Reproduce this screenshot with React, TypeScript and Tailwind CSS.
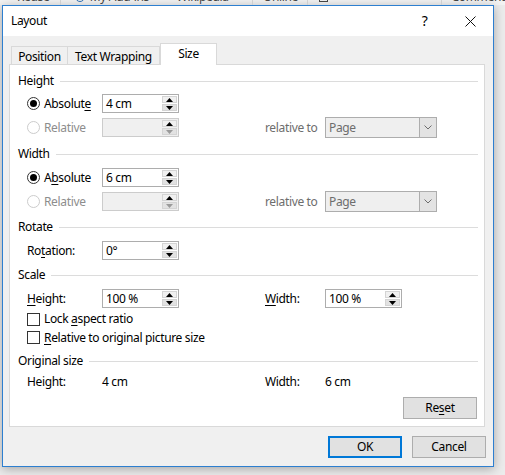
import React from 'react';

/* small triangle arrows for the spin buttons */
function Tri({ up, color }: { up?: boolean; color: string }) {
  return (
    <svg width="7" height="4" viewBox="0 0 7 4">
      <path d={up ? 'M0 4 L3.5 0 L7 4 Z' : 'M0 0 L3.5 4 L7 0 Z'} fill={color} />
    </svg>
  );
}

function Spin({ value, disabled }: { value?: string; disabled?: boolean }) {
  return (
    <div
      className={
        disabled
          ? 'flex h-[19px] w-[77px] border border-[#cccccc] bg-[#f0f0f0]'
          : 'flex h-[19px] w-[77px] border border-[#adadad] bg-white'
      }
    >
      <div className="flex flex-1 items-center pl-[3px] text-black">{value}</div>
      <div className="flex w-[16px] flex-col gap-px py-px pr-px">
        <div className="flex flex-1 items-center justify-center border border-[#d4d4d4] bg-[#f0f0f0]">
          <Tri up color="#000" />
        </div>
        <div className="flex flex-1 items-center justify-center border border-[#d4d4d4] bg-[#e2e2e2]">
          <Tri color={disabled ? '#9a9a9a' : '#000'} />
        </div>
      </div>
    </div>
  );
}

function Select() {
  return (
    <div className="flex h-[21px] w-[112px] border border-[#adadad] bg-[#efefef]">
      <div className="flex flex-1 items-center pl-[3px] text-[#6d6d6d]">Page</div>
      <div className="flex w-[17px] items-center justify-center border-l border-[#adadad] bg-[#e3e3e3]">
        <svg width="8" height="5" viewBox="0 0 8 5">
          <path d="M0.5 0.5 L4 4 L7.5 0.5" fill="none" stroke="#6d6d6d" strokeWidth="1" />
        </svg>
      </div>
    </div>
  );
}

function Radio({ checked, disabled }: { checked?: boolean; disabled?: boolean }) {
  return (
    <span
      className={
        disabled
          ? 'flex h-[13px] w-[13px] items-center justify-center rounded-full border border-[#cccccc] bg-white'
          : 'flex h-[13px] w-[13px] items-center justify-center rounded-full border border-[#333333] bg-white'
      }
    >
      {checked && <span className="h-[7px] w-[7px] rounded-full bg-black" />}
    </span>
  );
}

function Check() {
  return <span className="h-[13px] w-[13px] border border-[#333333] bg-white" />;
}

function Header({ children, className }: { children: React.ReactNode; className: string }) {
  return (
    <div className={`flex h-[20px] items-center pl-[8px] pr-[6px] ${className}`}>
      <span>{children}</span>
      <div className="ml-[6px] h-px flex-1 bg-[#dcdcdc]" />
    </div>
  );
}

function U({ children }: { children: React.ReactNode }) {
  return <span className="underline underline-offset-2">{children}</span>;
}

export default function App() {
  return (
    <div className="relative h-[475px] w-[505px] overflow-hidden bg-[#ececec] font-['Noto_Sans',sans-serif] text-[12px] leading-[16px] tracking-[-0.35px] text-black">
      {/* ── Ribbon behind the dialog ── */}
      <div className="h-[5px] overflow-hidden bg-[#f3f3f3] text-[#444]">
        <div className="-mt-[11px] flex h-[16px] items-center">
          <span className="ml-[17px] w-[46px]">Reuse</span>
          <span className="h-[16px] w-px bg-[#d0d0d0]" />
          <span className="ml-[14px] h-[10px] w-[10px] rounded-full border border-[#2b6cb0]" />
          <span className="ml-[5px] w-[90px]">My Add-ins</span>
          <span className="w-[82px] pl-[2px]">Wikipedia</span>
          <span className="h-[16px] w-px bg-[#d0d0d0]" />
          <span className="ml-[10px] w-[47px]">Online</span>
          <span className="h-[16px] w-px bg-[#d0d0d0]" />
          <span className="ml-[11px] h-[9px] w-[9px] border border-[#444]" />
          <span className="ml-[113px] h-[16px] w-px bg-[#d0d0d0]" />
          <span className="ml-[10px]">Comment</span>
        </div>
      </div>

      {/* ── Dialog ── */}
      <div className="ml-[2px] flex h-[462px] w-[492px] flex-col border border-[#2d7fd0] bg-[#f0f0f0] shadow-[0_2px_10px_rgba(0,0,0,0.3)]">
        {/* title bar */}
        <div className="flex h-[30px] items-center bg-white">
          <span className="flex-1 pl-[8px]">Layout</span>
          <span className="flex w-[45px] justify-center text-[14px]">?</span>
          <span className="flex w-[46px] justify-center">
            <svg width="11" height="11" viewBox="0 0 11 11">
              <path d="M0.5 0.5 L10.5 10.5 M10.5 0.5 L0.5 10.5" stroke="#111" strokeWidth="1" />
            </svg>
          </span>
        </div>

        <div className="flex flex-1 flex-col pt-[7px]">
          {/* tabs */}
          <div className="ml-[6px] flex items-end pl-[2px]">
            <div className="flex h-[18px] w-[57px] items-center justify-center border-l border-r border-t border-[#d9d9d9] bg-[#f0f0f0] pt-[2px]">
              Position
            </div>
            <div className="flex h-[18px] w-[92px] items-center justify-center border-r border-t border-[#d9d9d9] bg-[#f0f0f0] pt-[2px]">
              Text Wrapping
            </div>
            <div className="relative z-10 -mb-px flex h-[22px] w-[57px] items-center justify-center border-l border-r border-t border-[#d9d9d9] bg-white pb-[2px]">
              Size
            </div>
          </div>

          {/* panel */}
          <div className="ml-[6px] flex h-[363px] w-[476px] flex-col border border-[#d9d9d9] bg-white pt-[6px]">
            <Header className="">Height</Header>
            <div className="mt-[3px] flex h-[19px] items-center pl-[17px]">
              <div className="flex w-[75px] items-center gap-[4px]">
                <Radio checked />
                <span>
                  Absolut<U>e</U>
                </span>
              </div>
              <Spin value="4 cm" />
            </div>
            <div className="mt-[4px] flex h-[21px] items-center pl-[17px]">
              <div className="flex w-[75px] items-center gap-[4px] text-[#8d8d8d]">
                <Radio disabled />
                <span>Relative</span>
              </div>
              <Spin disabled />
              <span className="ml-[86px] w-[60px] text-[#6d6d6d]">relative to</span>
              <Select />
            </div>

            <Header className="mt-[6px]">Width</Header>
            <div className="mt-[4px] flex h-[19px] items-center pl-[17px]">
              <div className="flex w-[75px] items-center gap-[4px]">
                <Radio checked />
                <span>
                  A<U>b</U>solute
                </span>
              </div>
              <Spin value="6 cm" />
            </div>
            <div className="mt-[4px] flex h-[21px] items-center pl-[17px]">
              <div className="flex w-[75px] items-center gap-[4px] text-[#8d8d8d]">
                <Radio disabled />
                <span>Relative</span>
              </div>
              <Spin disabled />
              <span className="ml-[86px] w-[60px] text-[#6d6d6d]">relative to</span>
              <Select />
            </div>

            <Header className="mt-[5px]">Rotate</Header>
            <div className="mt-[4px] flex h-[19px] items-center pl-[17px]">
              <span className="w-[75px]">
                Ro<U>t</U>ation:
              </span>
              <Spin value="0°" />
            </div>

            <Header className="mt-[5px]">Scale</Header>
            <div className="mt-[4px] flex h-[19px] items-center pl-[17px]">
              <span className="w-[75px]">
                <U>H</U>eight:
              </span>
              <Spin value="100 %" />
              <span className="ml-[86px] w-[60px]">
                <U>W</U>idth:
              </span>
              <Spin value="100 %" />
            </div>
            <div className="mt-[2px] flex h-[18px] items-center gap-[4px] pl-[17px]">
              <Check />
              <span>
                Lock <U>a</U>spect ratio
              </span>
            </div>
            <div className="flex h-[19px] items-center gap-[4px] pl-[17px]">
              <Check />
              <span>
                <U>R</U>elative to original picture size
              </span>
            </div>

            <Header className="mt-[4px]">Original size</Header>
            <div className="mt-[1px] flex h-[20px] items-center pl-[17px]">
              <span className="w-[75px]">Height:</span>
              <span className="w-[163px]">4 cm</span>
              <span className="w-[60px]">Width:</span>
              <span>6 cm</span>
            </div>
            <div className="mt-[5px] flex justify-end pr-[7px]">
              <button className="h-[22px] w-[74px] border border-[#adadad] bg-[#e1e1e1]">
                Re<U>s</U>et
              </button>
            </div>
          </div>

          {/* footer buttons */}
          <div className="mt-[9px] flex justify-end gap-[10px] pr-[7px]">
            <button className="h-[22px] w-[74px] border-2 border-[#0078d7] bg-[#e1e1e1]">OK</button>
            <button className="h-[22px] w-[74px] border border-[#adadad] bg-[#e1e1e1]">Cancel</button>
          </div>
        </div>
      </div>
    </div>
  );
}
